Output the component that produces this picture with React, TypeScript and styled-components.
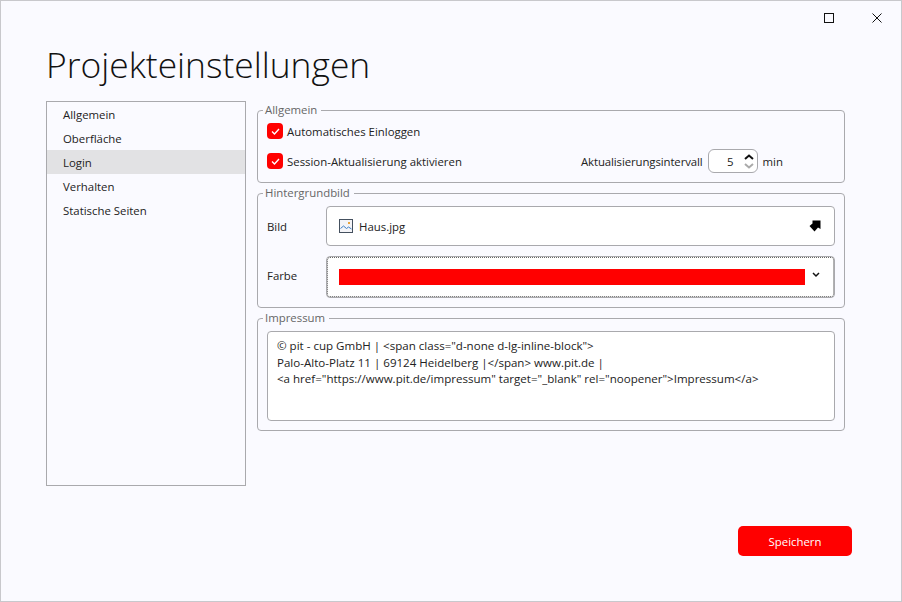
import React from "react";
import styled, { createGlobalStyle } from "styled-components";

const Global = createGlobalStyle`
  html, body { margin: 0; padding: 0; background: #fafaff; }
  body { font-family: "Open Sans", "Noto Sans", sans-serif; font-size: 11.4px; color: #222; }
  * { box-sizing: border-box; }
`;

const Window = styled.div`
  width: 902px;
  height: 602px;
  display: flex;
  flex-direction: column;
  background: #fafaff;
  border: 1px solid #c8c8cc;
  overflow: hidden;
`;

const TitleBar = styled.div`
  height: 33px;
  display: flex;
  justify-content: flex-end;
  flex: none;
`;

const WinButton = styled.div`
  width: 48px;
  height: 33px;
  display: flex;
  align-items: center;
  justify-content: center;
  color: #111;
`;

const Title = styled.h1`
  margin: 8px 0 0 45px;
  height: 59px;
  flex: none;
  font-family: "Open Sans", sans-serif;
  font-weight: 300;
  font-size: 35.4px;
  line-height: 44px;
  color: #111;
`;

const Body = styled.div`
  display: flex;
  align-items: flex-start;
  padding-left: 45px;
`;

const Side = styled.div`
  width: 200px;
  height: 385px;
  flex: none;
  border: 1px solid #a9a9ad;
`;

const SideItem = styled.div<{ $active?: boolean }>`
  height: 24px;
  line-height: 26px;
  padding-left: 16px;
  background: ${(p) => (p.$active ? "#e2e2e4" : "transparent")};
`;

const Content = styled.div`
  width: 588px;
  margin-left: 11px;
  display: flex;
  flex-direction: column;
`;

const Group = styled.fieldset<{ $gap: number; $pt: number }>`
  margin: ${(p) => p.$gap}px 0 0 0;
  padding: ${(p) => p.$pt}px 9px 9px 9px;
  border: 1px solid #a9a9ad;
  border-radius: 4px;
  min-width: 0;
`;

const Legend = styled.legend`
  padding: 0 4px 0 2px;
  margin-left: -4px;
  height: 16px;
  line-height: 16px;
  color: #666;
`;

const Row = styled.div<{ $mt?: number }>`
  display: flex;
  align-items: center;
  height: 24px;
  margin-top: ${(p) => p.$mt ?? 0}px;
`;

const Check = styled.span`
  width: 16px;
  height: 16px;
  flex: none;
  margin-right: 4px;
  border-radius: 4px;
  background: #ff0000;
  display: flex;
  align-items: center;
  justify-content: center;
`;

const Interval = styled.div`
  margin-left: auto;
  display: flex;
  align-items: center;
  margin-right: 52px;
`;

const IntervalLabel = styled.span`
  letter-spacing: -0.1px;
`;

const Spinner = styled.div`
  width: 50px;
  height: 24px;
  margin: 0 5px;
  border: 1px solid #a9a9ad;
  border-radius: 6px;
  background: #fff;
  display: flex;
  align-items: center;
  justify-content: flex-end;
  padding-right: 3px;
`;

const SpinValue = styled.span`
  margin-right: 10px;
`;

const SpinArrows = styled.div`
  display: flex;
  flex-direction: column;
  gap: 3px;
`;

const FieldRow = styled.div<{ $h: number; $mt?: number }>`
  display: flex;
  align-items: center;
  height: ${(p) => p.$h}px;
  margin-top: ${(p) => p.$mt ?? 0}px;
`;

const FieldLabel = styled.span<{ $lift?: number }>`
  width: 59px;
  flex: none;
  margin-bottom: ${(p) => p.$lift ?? 0}px;
`;

const FileBox = styled.div`
  flex: 1;
  height: 100%;
  background: #fff;
  border: 1px solid #a9a9ad;
  border-radius: 4px;
  display: flex;
  align-items: center;
  padding: 0 13px 0 12px;
`;

const FileName = styled.span`
  margin-left: 6px;
`;

const Push = styled.span`
  margin-left: auto;
  display: flex;
`;

const ColorBox = styled.div`
  flex: 1;
  height: 100%;
  background: #fff;
  border: 1px solid #a9a9ad;
  border-radius: 4px;
  outline: 1px dotted #666;
  outline-offset: -2px;
  display: flex;
  align-items: center;
  padding: 0 14px 0 12px;
`;

const Swatch = styled.div`
  flex: 1;
  height: 16px;
  background: #ff0000;
  margin-right: 7px;
`;

const Chevron = styled.svg`
  margin-bottom: 4px;
`;

const TextArea = styled.textarea`
  display: block;
  width: 100%;
  height: 90px;
  padding: 6px 9px;
  margin: 0;
  background: #fff;
  border: 1px solid #a9a9ad;
  border-radius: 4px;
  font: inherit;
  font-size: 11.55px;
  line-height: 16.5px;
  color: #222;
  resize: none;
  outline: none;
  overflow: hidden;
`;

const Footer = styled.div`
  display: flex;
  justify-content: flex-end;
  padding: 40px 49px 0 0;
`;

const SaveButton = styled.button`
  width: 114px;
  height: 30px;
  border: none;
  border-radius: 5px;
  background: #ff0000;
  color: #fff;
  font: inherit;
`;

const CheckMark = () => (
  <svg width="9" height="7" viewBox="0 0 9 7" fill="none" stroke="#fff" strokeWidth="1.3">
    <path d="M1 3.500l2.500 2.500 4.500-5" />
  </svg>
);

const impressum = `© pit - cup GmbH | <span class="d-none d-lg-inline-block">
Palo-Alto-Platz 11 | 69124 Heidelberg |</span> www.pit.de |
<a href="https://www.pit.de/impressum" target="_blank" rel="noopener">Impressum</a>`;

export default function App() {
  return (
    <Window>
      <Global />
      <TitleBar>
        <WinButton>
          <svg width="10" height="10" viewBox="0 0 10 10" fill="none" stroke="#111">
            <rect x="0.5" y="0.5" width="9" height="9" />
          </svg>
        </WinButton>
        <WinButton>
          <svg width="10" height="10" viewBox="0 0 10 10" fill="none" stroke="#111">
            <path d="M0.5 0.5l9 9M9.5 0.5l-9 9" />
          </svg>
        </WinButton>
      </TitleBar>
      <Title>Projekteinstellungen</Title>
      <Body>
        <Side>
          <SideItem>Allgemein</SideItem>
          <SideItem>Oberfläche</SideItem>
          <SideItem $active>Login</SideItem>
          <SideItem>Verhalten</SideItem>
          <SideItem>Statische Seiten</SideItem>
        </Side>
        <Content>
          <Group $gap={1} $pt={1}>
            <Legend>Allgemein</Legend>
            <Row>
              <Check><CheckMark /></Check>
              Automatisches Einloggen
            </Row>
            <Row $mt={6}>
              <Check><CheckMark /></Check>
              Session-Aktualisierung aktivieren
              <Interval>
                <IntervalLabel>Aktualisierungsintervall</IntervalLabel>
                <Spinner>
                  <SpinValue>5</SpinValue>
                  <SpinArrows>
                    <svg width="10" height="6" viewBox="0 0 10 6" fill="none" stroke="#111" strokeWidth="2">
                      <path d="M1 5l4-3.500 4 3.500" />
                    </svg>
                    <svg width="10" height="6" viewBox="0 0 10 6" fill="none" stroke="#aaa" strokeWidth="2">
                      <path d="M1 1l4 3.500 4-3.500" />
                    </svg>
                  </SpinArrows>
                </Spinner>
                min
              </Interval>
            </Row>
          </Group>
          <Group $gap={2} $pt={5}>
            <Legend>Hintergrundbild</Legend>
            <FieldRow $h={40}>
              <FieldLabel>Bild</FieldLabel>
              <FileBox>
                <svg width="14" height="14" viewBox="0 0 14 14" fill="none">
                  <rect x="0.5" y="0.5" width="13" height="13" fill="#f4f4f8" stroke="#44505e" />
                  <path d="M1.500 9.500l3-2.500 3 2.500 2-1.500 3 2" stroke="#3f7fc4" />
                  <rect x="9" y="3" width="2" height="2" fill="#e8a33d" />
                </svg>
                <FileName>Haus.jpg</FileName>
                <Push>
                  <svg width="12" height="12" viewBox="0 0 12 12" fill="#000">
                    <path d="M3.500 0.500H11.500V9L9 7.500L5.500 11.500L0.500 6L3.500 3.500z" />
                  </svg>
                </Push>
              </FileBox>
            </FieldRow>
            <FieldRow $h={42} $mt={10}>
              <FieldLabel $lift={3}>Farbe</FieldLabel>
              <ColorBox>
                <Swatch />
                <Chevron width="8" height="6" viewBox="0 0 8 6" fill="none" stroke="#111" strokeWidth="1.5">
                  <path d="M1 1l3 3 3-3" />
                </Chevron>
              </ColorBox>
            </FieldRow>
          </Group>
          <Group $gap={2} $pt={5}>
            <Legend>Impressum</Legend>
            <TextArea readOnly defaultValue={impressum} />
          </Group>
        </Content>
      </Body>
      <Footer>
        <SaveButton>Speichern</SaveButton>
      </Footer>
    </Window>
  );
}
